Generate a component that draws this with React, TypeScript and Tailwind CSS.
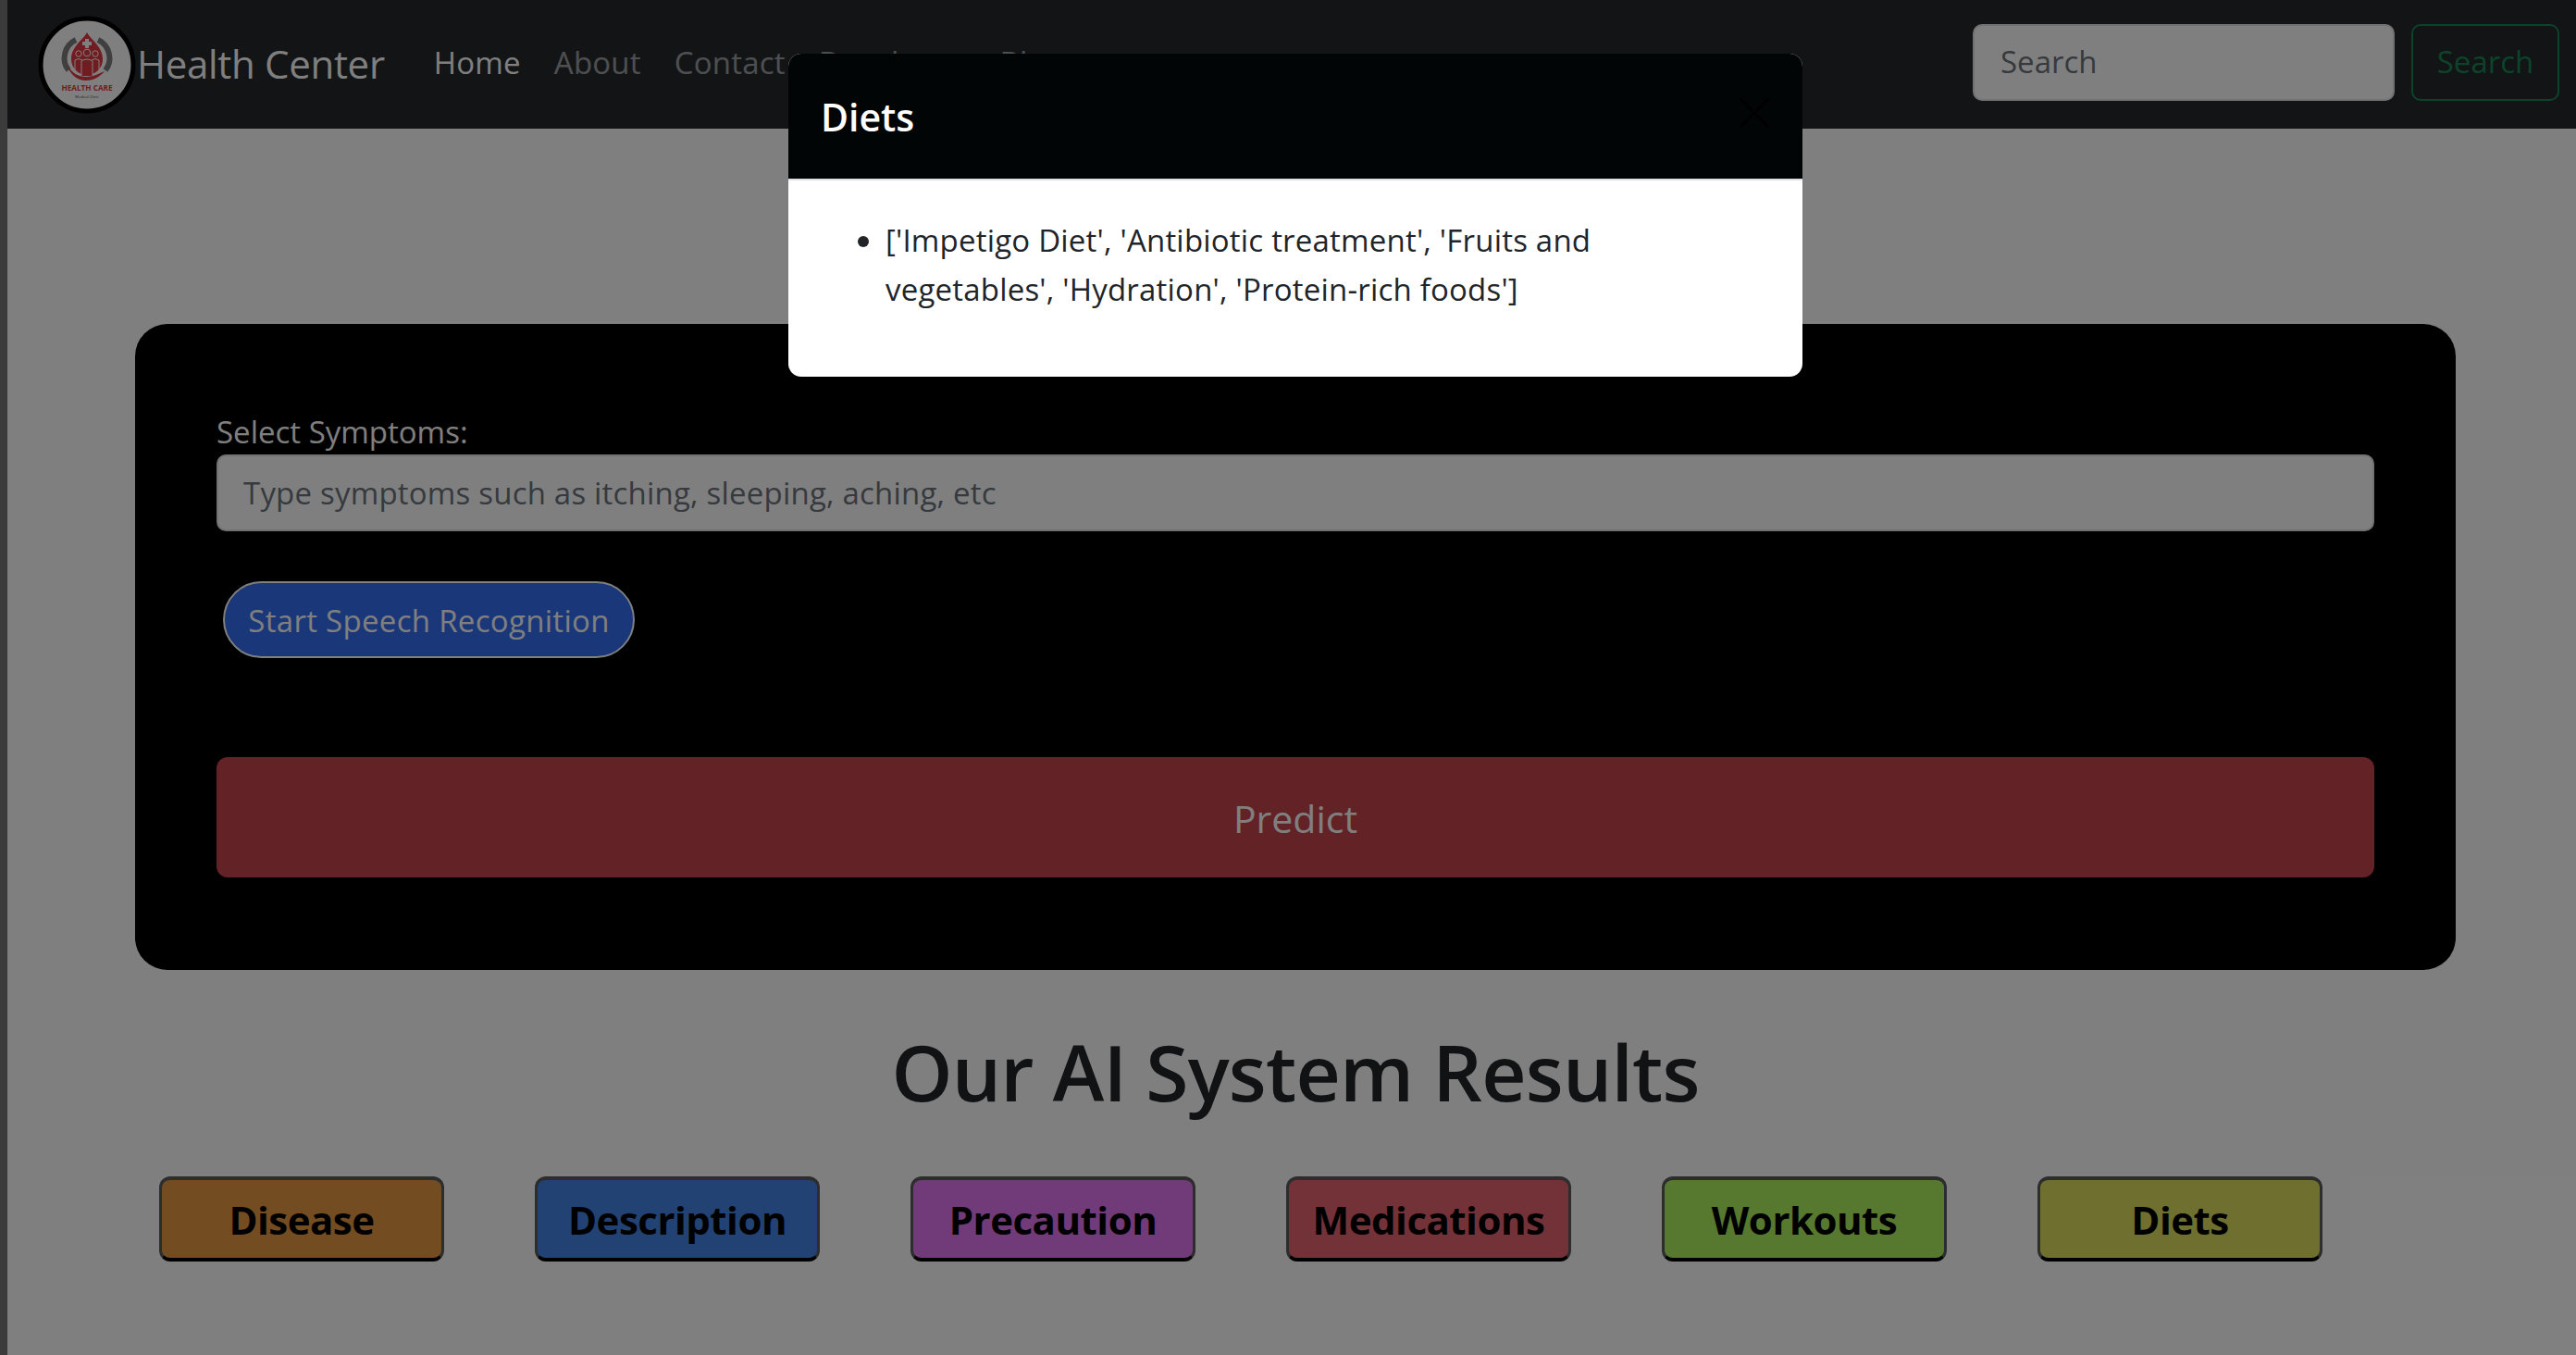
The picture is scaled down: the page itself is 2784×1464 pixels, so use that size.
const RESULT_BUTTONS = [
  { label: "Disease", bg: "bg-[#e69844]" },
  { label: "Description", bg: "bg-[#4484e8]" },
  { label: "Precaution", bg: "bg-[#e274f0]" },
  { label: "Medications", bg: "bg-[#e66470]" },
  { label: "Workouts", bg: "bg-[#aef05e]" },
  { label: "Diets", bg: "bg-[#dee05e]" },
];

function Logo() {
  return (
    <svg viewBox="0 0 108 108" className="h-[108px] w-[108px] shrink-0">
      <circle cx="54" cy="54" r="50" fill="#fff" stroke="#000" strokeWidth="5" />
      {/* grey ring */}
      <path d="M42 27A22 22 0 0 0 34 60M66 27A22 22 0 0 1 74 60" fill="none" stroke="#7e7e7e" strokeWidth="6" />
      {/* drop */}
      <path d="M54 19C50 27 37 34 37 48a17 17 0 0 0 34 0C71 34 58 27 54 19Z" fill="#e03840" />
      <path d="M52 26h4v3h3v4h-3v3h-4v-3h-3v-4h3Z" fill="#fff" />
      {/* people */}
      <circle cx="45" cy="42" r="3.2" fill="#e03840" stroke="#fff" strokeWidth="1" />
      <circle cx="63" cy="42" r="3.2" fill="#e03840" stroke="#fff" strokeWidth="1" />
      <path d="M41 62V49q4-3 8 0M67 62V49q-4-3-8 0" fill="none" stroke="#fff" strokeWidth="1" />
      <circle cx="54" cy="41" r="3.8" fill="#e03840" stroke="#fff" strokeWidth="1" />
      <path d="M48 66V50q6-4 12 0v16" fill="#e03840" stroke="#fff" strokeWidth="1" />
      {/* hand */}
      <path d="M33 54c4 9 12 13 20 13 7 0 13-3 20-6-5 6-12 10-20 10-10 0-18-7-20-17Z" fill="#e03840" />
      <text x="54" y="82" textAnchor="middle" fontSize="8.2" fontWeight="700" fill="#e03840" fontFamily="'Open Sans', sans-serif">HEALTH CARE</text>
      <text x="54" y="90" textAnchor="middle" fontSize="4" fill="#444" fontFamily="'Open Sans', sans-serif">Medical Clinic</text>
    </svg>
  );
}

function Navbar() {
  return (
    <nav className="flex h-[139px] items-center justify-between bg-[#24282c] pl-[32px] pr-[26px]">
      <div className="flex items-center">
        <Logo />
        <span className="mb-[3px] text-[42px] tracking-[-0.3px] text-white">Health Center</span>
        <ul className="mb-[3px] ml-[53px] flex gap-[36px] text-[33px] tracking-[0.2px] text-white/55">
          <li className="text-white">Home</li>
          <li>About</li>
          <li>Contact</li>
          <li>Developer</li>
          <li>Blog</li>
        </ul>
      </div>
      <div className="mb-[5px] flex gap-[18px]">
        <div className="flex h-[83px] w-[456px] items-center rounded-[10px] border-2 border-[#dee2e6] bg-white px-[28px] text-[33px] text-[#6c757d]">
          Search
        </div>
        <button className="h-[83px] w-[160px] rounded-[10px] border-2 border-[#198754] text-[33px] text-[#198754]">
          Search
        </button>
      </div>
    </nav>
  );
}

function PredictCard() {
  return (
    <section className="mx-[138px] mt-[211px] h-[698px] rounded-[35px] bg-black px-[88px] pt-[93px]">
      <label className="block pb-[2px] text-[33px] leading-[47px] text-white">Select Symptoms:</label>
      <div className="mt-[-1px] flex h-[83px] items-center rounded-[10px] border-2 border-[#dee2e6] bg-white px-[27px] text-[33px] tracking-[0.2px] text-[#6c757d]">
        Type symptoms such as itching, sleeping, aching, etc
      </div>
      <button className="ml-[7px] mt-[54px] block h-[83px] w-[445px] rounded-full border-2 border-white bg-[#346ef2] pt-[2px] text-[33px] tracking-[0.3px] text-white">
        Start Speech Recognition
      </button>
      <button className="mt-[107px] block h-[130px] w-full rounded-[12px] bg-[#c6444c] pt-[4px] text-[41px] text-white">
        Predict
      </button>
    </section>
  );
}

function Results() {
  return (
    <section>
      <h1 className="mt-[60px] text-center text-[84px] font-semibold leading-[100px] tracking-[-0.8px] text-[#212529]">
        Our AI System Results
      </h1>
      <div className="ml-[164px] mt-[63px] flex gap-[98px]">
        {RESULT_BUTTONS.map((b) => (
          <button
            key={b.label}
            className={`h-[92px] w-[308px] rounded-[12px] border-[3px] border-t-[4px] border-b-[4px] border-[#5a5a5a] border-b-black text-[42px] font-bold tracking-[-0.5px] text-black ${b.bg}`}
          >
            {b.label}
          </button>
        ))}
      </div>
    </section>
  );
}

function DietsModal() {
  return (
    <div className="absolute left-0 top-0 h-[1464px] w-[2800px] bg-black/50">
      <div className="mx-auto mt-[58px] w-[1096px] overflow-hidden rounded-[14px] bg-white">
        <div className="flex h-[137px] items-center justify-between border-b-2 border-[#dee2e6] bg-[#020506] pl-[35px] pr-[34px]">
          <h5 className="mt-[2px] text-[41px] font-semibold text-white">Diets</h5>
          <svg viewBox="0 0 36 36" className="mb-[8px] h-[36px] w-[36px]" fill="none" stroke="#000" strokeWidth="3">
            <path d="M2 2l32 32M34 2L2 34" />
          </svg>
        </div>
        <ul className="h-[212px] list-disc pl-[105px] pr-[160px] pt-[38px] text-[33px] leading-[53px] tracking-[0.2px] text-[#212529]">
          <li>['Impetigo Diet', 'Antibiotic treatment', 'Fruits and vegetables', 'Hydration', 'Protein-rich foods']</li>
        </ul>
      </div>
    </div>
  );
}

export default function App() {
  return (
    <div className="relative flex h-[1464px] overflow-hidden bg-white font-['Open_Sans',sans-serif]">
      <div className="w-[8px] shrink-0 bg-[#777777]" />
      <main className="w-[2784px] shrink-0">
        <Navbar />
        <PredictCard />
        <Results />
      </main>
      <DietsModal />
    </div>
  );
}
